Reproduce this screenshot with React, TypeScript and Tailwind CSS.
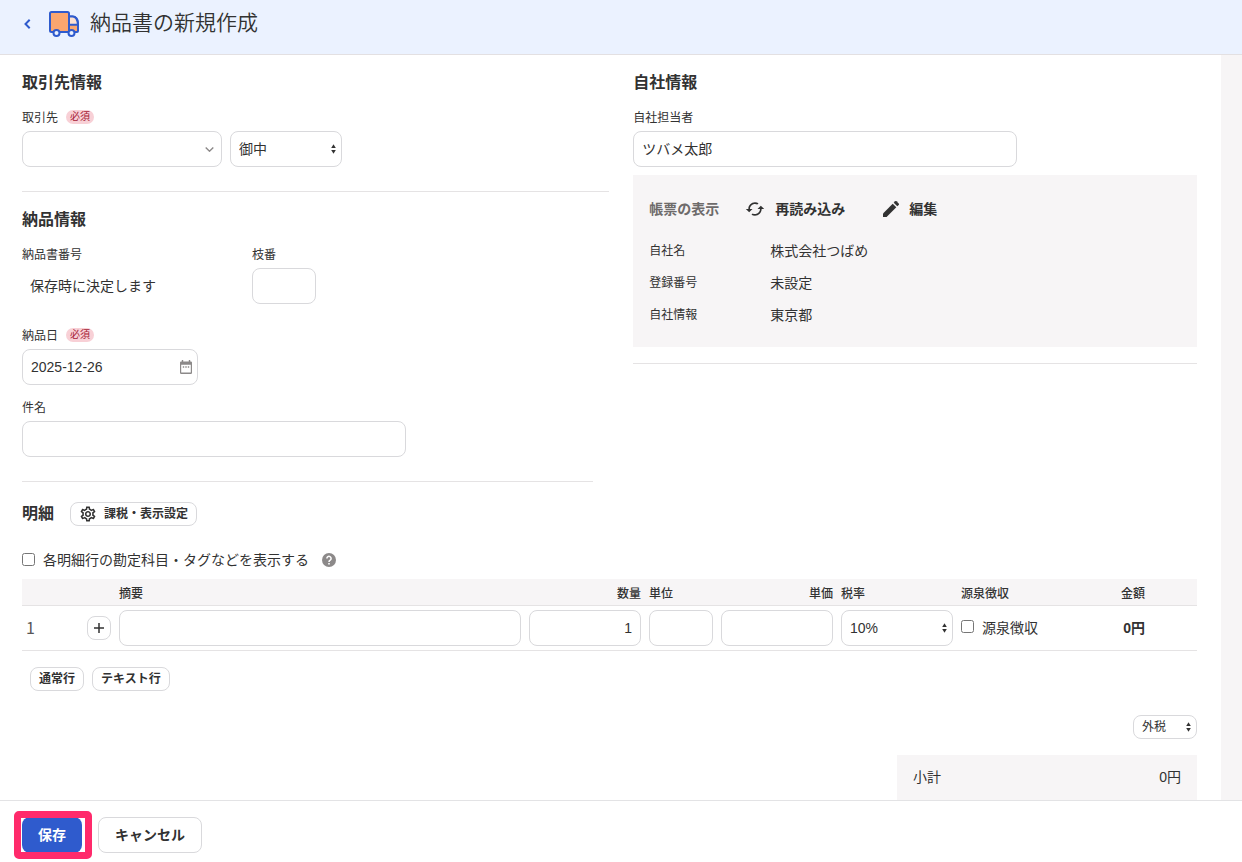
import { useState } from 'react';
import type { ReactNode, SelectHTMLAttributes, InputHTMLAttributes } from 'react';

const FIELD =
  'h-9 rounded-lg border border-[#d9d9dc] bg-white px-2 text-sm text-[#323232] outline-none focus:border-[#2f5bcd]';

function SortArrows() {
  return (
    <svg
      className="pointer-events-none absolute right-[6px] top-1/2 -mt-[5px] h-[10px] w-[5px]"
      viewBox="0 0 5 10"
      fill="#323232"
      aria-hidden="true"
    >
      <path d="M2.5 0.300 4.800 3.900H.200z" />
      <path d="M2.5 9.700.200 6.100h4.600z" />
    </svg>
  );
}

function Select({
  options,
  className,
  ...rest
}: { options: string[] } & SelectHTMLAttributes<HTMLSelectElement>) {
  return (
    <span className="relative inline-block align-middle">
      <select {...rest} className={`${className} cursor-pointer appearance-none rounded-lg border border-[#d9d9dc] bg-white px-2 text-[#323232] outline-none`}>
        {options.map((o) => (
          <option key={o}>{o}</option>
        ))}
      </select>
      <SortArrows />
    </span>
  );
}

function Input({ className = '', ...rest }: InputHTMLAttributes<HTMLInputElement>) {
  return <input {...rest} className={`${FIELD} ${className}`} />;
}

function Heading({ children }: { children: ReactNode }) {
  return <h2 className="text-base font-bold leading-6">{children}</h2>;
}

function Label({ htmlFor, required, children }: { htmlFor: string; required?: boolean; children: ReactNode }) {
  return (
    <div className="mb-[3px] flex h-5 items-start gap-2 text-xs leading-5">
      <label htmlFor={htmlFor}>{children}</label>
      {required && (
        <span className="mt-0.5 rounded-full bg-[#f8d0d6] px-1 text-[10px] leading-[14px] text-[#a61c36]">必須</span>
      )}
    </div>
  );
}

function SmallButton({ children }: { children: ReactNode }) {
  return (
    <button
      type="button"
      className="flex h-6 items-center rounded-lg border border-[#d9d9dc] bg-white px-2 text-xs font-bold"
    >
      {children}
    </button>
  );
}

function TruckIcon() {
  return (
    <svg className="h-[26px] w-[30px]" viewBox="0 0 30 26" fill="none" stroke="#2f5bcd" strokeWidth="2" aria-hidden="true">
      <path d="M20 5.5h3.5c3.500 0 5.500 3 5.500 6.500V20a1 1 0 0 1-1 1h-8z" fill="#faa66f" />
      <path d="M20 5.5h3.500c3 0 5 2.400 5.400 8.200H20z" fill="#fde0d0" />
      <rect x="1" y="1" width="19" height="20" rx="1.5" fill="#faa66f" />
      <circle cx="7.5" cy="22" r="3" fill="#ebf2ff" />
      <circle cx="22.500" cy="22" r="3" fill="#ebf2ff" />
    </svg>
  );
}

function ReloadIcon() {
  return (
    <svg className="h-5 w-5" viewBox="0 0 24 24" fill="#323232" aria-hidden="true">
      <path d="m19 8-4 4h3c0 3.310-2.690 6-6 6-1.010 0-1.970-.250-2.800-.700l-1.460 1.460C8.970 19.540 10.430 20 12 20c4.420 0 8-3.580 8-8h3l-4-4zM6 12c0-3.310 2.690-6 6-6 1.010 0 1.970.250 2.800.700l1.460-1.460C15.030 4.460 13.570 4 12 4c-4.420 0-8 3.580-8 8H1l4 4 4-4H6z" />
    </svg>
  );
}

function PencilIcon() {
  return (
    <svg className="h-4 w-4" viewBox="0 0 16 16" fill="#323232" aria-hidden="true">
      <path d="M0 16v-3.6L9.7 2.7l3.6 3.6L3.6 16z" />
      <path d="m10.7 1.7 1.4-1.4a1 1 0 0 1 1.4 0l2.2 2.2a1 1 0 0 1 0 1.4l-1.4 1.4z" />
    </svg>
  );
}

function GearIcon() {
  return (
    <svg className="h-4 w-4" viewBox="1.500 1.500 21 21" fill="#323232" aria-hidden="true">
      <path d="M19.43 12.98c.04-.32.07-.64.07-.98 0-.34-.03-.66-.07-.98l2.11-1.65c.19-.15.24-.42.12-.64l-2-3.46a.5.5 0 0 0-.61-.22l-2.49 1c-.52-.4-1.08-.73-1.69-.98l-.38-2.65A.488.488 0 0 0 14 2h-4c-.25 0-.46.18-.49.42l-.38 2.65c-.61.25-1.17.59-1.69.98l-2.49-1a.5.5 0 0 0-.61.22l-2 3.46c-.13.22-.07.49.12.64l2.11 1.65c-.04.32-.07.65-.07.98 0 .33.03.66.07.98l-2.11 1.65c-.19.15-.24.42-.12.64l2 3.46c.12.22.39.3.61.22l2.49-1c.52.4 1.08.73 1.69.98l.38 2.65c.03.24.24.42.49.42h4c.25 0 .46-.18.49-.42l.38-2.65c.61-.25 1.17-.59 1.69-.98l2.49 1a.5.5 0 0 0 .61-.22l2-3.46c.12-.22.07-.49-.12-.64l-2.11-1.65zm-1.98-1.71c.04.31.05.52.05.73 0 .21-.02.43-.05.73l-.14 1.13.89.7 1.08.84-.7 1.21-1.27-.51-1.04-.42-.9.68c-.43.32-.84.56-1.25.73l-1.06.43-.16 1.13-.2 1.35h-1.4l-.19-1.35-.16-1.13-1.06-.43c-.43-.18-.83-.41-1.23-.71l-.91-.7-1.06.43-1.27.51-.7-1.21 1.08-.84.89-.7-.14-1.13c-.03-.31-.05-.54-.05-.74s.02-.43.05-.73l.14-1.13-.89-.7-1.08-.84.7-1.21 1.27.51 1.04.42.9-.68c.43-.32.84-.56 1.25-.73l1.06-.43.16-1.13.2-1.35h1.39l.19 1.35.16 1.13 1.06.43c.43.18.83.41 1.23.71l.91.7 1.06-.43 1.27-.51.7 1.21-1.07.85-.89.7.14 1.13zM12 8c-2.21 0-4 1.79-4 4s1.79 4 4 4 4-1.79 4-4-1.79-4-4-4zm0 6c-1.1 0-2-.9-2-2s.9-2 2-2 2 .9 2 2-.9 2-2 2z" />
    </svg>
  );
}

function CalendarIcon() {
  return (
    <svg className="h-[14px] w-3" viewBox="0 0 12 14" fill="#8c8989" aria-hidden="true">
      <path
        fillRule="evenodd"
        d="M1.800 0h1.400v1.400h5.600V0h1.400v1.400h.600A1.200 1.200 0 0 1 12 2.600v10.200A1.200 1.200 0 0 1 10.800 14H1.200A1.200 1.200 0 0 1 0 12.800V2.600A1.200 1.200 0 0 1 1.200 1.400h.600zM1.200 4.800v7.800h9.600V4.800z"
      />
      <path d="M2.800 6.300h1.400v1.400H2.800zM5.300 6.300h1.400v1.400H5.300zM7.800 6.300h1.400v1.400H7.800z" />
    </svg>
  );
}

function HelpIcon() {
  return (
    <svg className="h-[14px] w-[14px]" viewBox="0 0 14 14" fill="none" aria-hidden="true">
      <circle cx="7" cy="7" r="7" fill="#8c8989" />
      <path d="M4.900 5.500a2.100 2.100 0 1 1 3.300 1.700C7.400 7.700 7 8 7 8.900" stroke="#fff" strokeWidth="1.500" />
      <path d="M6.200 9.900h1.600v1.500H6.200z" fill="#fff" />
    </svg>
  );
}

const COMPANY = [
  ['自社名', '株式会社つばめ'],
  ['登録番号', '未設定'],
  ['自社情報', '東京都'],
];

export default function App() {
  const [showTags, setShowTags] = useState(false);
  const [withholding, setWithholding] = useState(false);

  return (
    <div className="flex h-screen flex-col bg-white font-['Liberation_Sans','Noto_Sans_CJK_JP',sans-serif] text-sm text-[#323232]">
      <header className="flex shrink-0 items-start border-b border-[#e3e0e2] bg-[#ebf2ff] pb-[14px] pl-[22px] pt-2">
        <a href="#back" aria-label="戻る" className="flex h-8 w-[11px] items-center justify-center">
          <svg className="h-[10px] w-[7px]" viewBox="0 0 7 10" fill="none" stroke="#2f5bcd" strokeWidth="2" aria-hidden="true">
            <path d="M5.700.700 1.500 5l4.200 4.300" />
          </svg>
        </a>
        <span className="ml-4 flex h-8 items-center">
          <TruckIcon />
        </span>
        <h1 className="ml-[11px] text-[21px] font-[350] leading-[30px]">納品書の新規作成</h1>
      </header>

      <div className="flex min-h-0 flex-1 overflow-hidden bg-[#f7f5f6] pr-[21px]">
        <main className="min-w-0 flex-1 overflow-y-auto bg-white pl-[22px] pr-6 [scrollbar-width:none]">
          <div className="grid grid-cols-[25fr_24fr] gap-6">
            <div>
              <section className="border-b border-[#e5e3e4] pb-6 pt-4">
                <Heading>取引先情報</Heading>
                <div className="mt-[13px]">
                  <Label htmlFor="partner" required>取引先</Label>
                  <div className="flex gap-2">
                    <div className="relative">
                      <Input id="partner" role="combobox" aria-expanded={false} className="w-[200px] pr-7" />
                      <svg
                        className="pointer-events-none absolute right-2 top-4 h-[5px] w-[9px]"
                        viewBox="0 0 9 5"
                        fill="none"
                        stroke="#8c8989"
                        strokeWidth="1.400"
                        aria-hidden="true"
                      >
                        <path d="m.700.500 3.800 3.700L8.300.500" />
                      </svg>
                    </div>
                    <Select aria-label="敬称" options={['御中', '様']} className="h-9 w-28 text-sm" />
                  </div>
                </div>
              </section>

              <section className="mr-4 border-b border-[#e5e3e4] pb-6 pt-4">
                <Heading>納品情報</Heading>
                <div className="mt-[13px] flex">
                  <div className="w-[230px]">
                    <Label htmlFor="number">納品書番号</Label>
                    <output id="number" className="flex h-9 items-center px-2">保存時に決定します</output>
                  </div>
                  <div>
                    <Label htmlFor="branch">枝番</Label>
                    <Input id="branch" className="w-16" />
                  </div>
                </div>
                <div className="mt-[22px]">
                  <Label htmlFor="date" required>納品日</Label>
                  <div className="relative w-44">
                    <Input id="date" defaultValue="2025-12-26" className="w-full" />
                    <span className="pointer-events-none absolute right-[6px] top-[11px]">
                      <CalendarIcon />
                    </span>
                  </div>
                </div>
                <div className="mt-[13px]">
                  <Label htmlFor="subject">件名</Label>
                  <Input id="subject" className="w-96" />
                </div>
              </section>
            </div>

            <section className="pt-4">
              <Heading>自社情報</Heading>
              <div className="mt-[13px] border-b border-[#e5e3e4] pb-4">
                <Label htmlFor="person">自社担当者</Label>
                <Input id="person" defaultValue="ツバメ太郎" className="w-96 pb-0.5" />
                <div className="mt-2 bg-[#f7f5f6] px-4 pb-4 pt-[18px]">
                  <div className="flex h-8 items-center font-bold">
                    <span className="text-[#6e6b6b]">帳票の表示</span>
                    <button type="button" className="ml-[26px] flex items-center gap-[10px]">
                      <ReloadIcon />
                      再読み込み
                    </button>
                    <button type="button" className="ml-[38px] flex items-center gap-[10px]">
                      <PencilIcon />
                      編集
                    </button>
                  </div>
                  <dl className="mt-[10px]">
                    {COMPANY.map(([term, value]) => (
                      <div key={term} className="flex h-8 items-center">
                        <dt className="w-[121px] text-xs">{term}</dt>
                        <dd>{value}</dd>
                      </div>
                    ))}
                  </dl>
                </div>
              </div>
            </section>
          </div>

          <section className="pt-5">
            <div className="flex items-center gap-4">
              <Heading>明細</Heading>
              <SmallButton>
                <span className="mr-2 pl-px">
                  <GearIcon />
                </span>
                課税・表示設定
              </SmallButton>
            </div>

            <div className="mb-[9px] mt-6 flex h-5 items-center">
              <label className="flex items-center gap-2">
                <input
                  type="checkbox"
                  checked={showTags}
                  onChange={(e) => setShowTags(e.target.checked)}
                  className="mb-0.5 h-[13px] w-[13px]"
                />
                各明細行の勘定科目・タグなどを表示する
              </label>
              <button type="button" aria-label="ヘルプ" className="ml-[13px]">
                <HelpIcon />
              </button>
            </div>

            <table className="w-full table-fixed border-collapse">
              <colgroup>
                <col className="w-[61px]" />
                <col className="w-8" />
                <col />
                <col className="w-[120px]" />
                <col className="w-[72px]" />
                <col className="w-[120px]" />
                <col className="w-[120px]" />
                <col className="w-[104px]" />
                <col className="w-[88px]" />
                <col className="w-12" />
              </colgroup>
              <thead>
                <tr className="h-[26px] border-b border-[#e5e3e4] bg-[#f7f5f6] text-left text-xs">
                  <td />
                  <td />
                  <th className="px-1 pt-1 font-medium">摘要</th>
                  <th className="px-1 pt-1 text-right font-medium">数量</th>
                  <th className="px-1 pt-1 font-medium">単位</th>
                  <th className="px-1 pt-1 text-right font-medium">単価</th>
                  <th className="px-1 pt-1 font-medium">税率</th>
                  <th className="px-1 pt-1 font-medium">源泉徴収</th>
                  <th className="px-1 pt-1 text-right font-medium">金額</th>
                  <td />
                </tr>
              </thead>
              <tbody>
                <tr className="h-[45px] border-b border-[#e5e3e4]">
                  <td className="px-1 pb-0.5 text-base font-['Noto_Sans_CJK_JP',sans-serif] leading-6 text-[#595757]">1</td>
                  <td className="px-1">
                    <button
                      type="button"
                      aria-label="行を追加"
                      className="flex h-6 w-6 items-center justify-center rounded-lg border border-[#d9d9dc] bg-white"
                    >
                      <svg className="h-[10px] w-[10px]" viewBox="0 0 10 10" stroke="#323232" strokeWidth="1.500" aria-hidden="true">
                        <path d="M5 0v10M0 5h10" />
                      </svg>
                    </button>
                  </td>
                  <td className="px-1"><Input aria-label="摘要" className="block w-full" /></td>
                  <td className="px-1"><Input aria-label="数量" defaultValue="1" className="block w-full text-right" /></td>
                  <td className="px-1"><Input aria-label="単位" className="block w-full" /></td>
                  <td className="px-1"><Input aria-label="単価" className="block w-full text-right" /></td>
                  <td className="px-1">
                    <Select aria-label="税率" options={['10%', '8%', '0%']} className="block h-9 w-28 text-sm" />
                  </td>
                  <td className="px-1">
                    <label className="flex items-center gap-2 whitespace-nowrap">
                      <input
                        type="checkbox"
                        checked={withholding}
                        onChange={(e) => setWithholding(e.target.checked)}
                        className="mb-0.5 h-[13px] w-[13px]"
                      />
                      源泉徴収
                    </label>
                  </td>
                  <td className="px-1 text-right font-bold">0円</td>
                  <td />
                </tr>
              </tbody>
            </table>

            <div className="mt-4 flex gap-2 pl-2">
              <SmallButton>通常行</SmallButton>
              <SmallButton>テキスト行</SmallButton>
            </div>

            <div className="mt-6 flex justify-end">
              <Select aria-label="税区分" options={['外税', '内税']} className="block h-6 w-16 text-xs" />
            </div>

            <dl className="ml-auto mt-4 flex w-[300px] flex-col gap-0.5 bg-[#f7f5f6] px-4 py-2">
              <div className="flex h-7 items-center justify-between"><dt>小計</dt><dd>0円</dd></div>
              <div className="flex h-7 items-center justify-between"><dt>消費税</dt><dd>0円</dd></div>
            </dl>
          </section>
        </main>
      </div>

      <footer className="flex shrink-0 gap-4 border-t border-[#e3e3e5] bg-white pb-[9px] pl-[22px] pt-4">
        <div className="relative">
          <button type="button" className="block h-9 rounded-lg bg-[#2f5bcd] px-4 font-bold text-white">
            保存
          </button>
          <span className="pointer-events-none absolute -bottom-[6px] -left-2 -right-[10px] -top-[6px] rounded-[5px] border-[7px] border-[#ff2a6b]" />
        </div>
        <button type="button" className="h-9 rounded-lg border border-[#d9d9dc] bg-white px-4 font-bold">
          キャンセル
        </button>
      </footer>
    </div>
  );
}
